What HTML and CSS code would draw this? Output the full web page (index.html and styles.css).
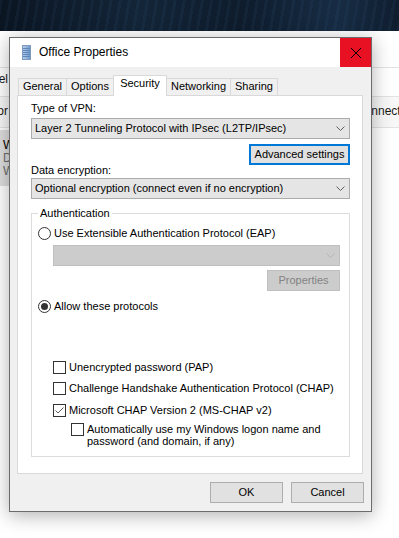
FILE: index.html
```html
<!DOCTYPE html>
<html>
<head>
<meta charset="utf-8">
<title>Office Properties</title>
<link rel="stylesheet" href="styles.css">
</head>
<body>
<div class="wallpaper"></div>
<div class="bgwin">
  <div class="bg-row bg-top"></div>
  <div class="bg-row bg-nav"><div class="bg-left"><span>Control Panel</span></div></div>
  <div class="bg-row bg-tool">
    <div class="bg-left"><span>Monitor</span></div>
    <div class="bg-rightwrap"><span class="bg-right">Connection</span></div>
  </div>
  <div class="bg-list">
    <div class="bg-item">
      <div class="bg-line">WAN</div>
      <div class="bg-line muted">DSL</div>
      <div class="bg-line muted">WAN</div>
    </div>
  </div>
</div>

<div class="dialog">
  <div class="titlebar">
    <svg class="appicon" width="9" height="15" viewBox="0 0 9 15">
      <defs>
        <linearGradient id="ig" x1="0" y1="0" x2="1" y2="0">
          <stop offset="0" stop-color="#b9d2ee"/>
          <stop offset="1" stop-color="#6d97c8"/>
        </linearGradient>
      </defs>
      <rect x="0.5" y="0.5" width="8" height="14" fill="url(#ig)" stroke="#7f9cc0"/>
      <path d="M1 3.5H8M1 5.5H8M1 7.5H8M1 9.5H8M1 11.5H8" stroke="#5f86b6" stroke-width="1"/>
    </svg>
    <span class="title">Office Properties</span>
    <div class="close">
      <svg width="10" height="10" viewBox="0 0 10 10"><path d="M0 0L10 10M10 0L0 10" stroke="#000" stroke-width="1"/></svg>
    </div>
  </div>
  <div class="dbody">
    <div class="tabs">
      <div class="tab t-general">General</div>
      <div class="tab t-options">Options</div>
      <div class="tab t-security active">Security</div>
      <div class="tab t-net">Networking</div>
      <div class="tab t-share">Sharing</div>
    </div>
    <div class="panel">
      <div class="label">Type of VPN:</div>
      <div class="select">
        <span>Layer 2 Tunneling Protocol with IPsec (L2TP/IPsec)</span>
        <svg class="chev" width="9" height="5" viewBox="0 0 9 5"><path d="M0.5 0.5L4.5 4.5L8.5 0.5" fill="none" stroke="#606060"/></svg>
      </div>
      <div class="right-row"><div class="btn adv">Advanced settings</div></div>
      <div class="label label-tight">Data encryption:</div>
      <div class="select">
        <span>Optional encryption (connect even if no encryption)</span>
        <svg class="chev" width="9" height="5" viewBox="0 0 9 5"><path d="M0.5 0.5L4.5 4.5L8.5 0.5" fill="none" stroke="#606060"/></svg>
      </div>
      <fieldset class="group">
        <legend>Authentication</legend>
        <div class="opt opt-eap"><span class="radio"></span>Use Extensible Authentication Protocol (EAP)</div>
        <div class="select disabled">
          <span></span>
          <svg class="chev" width="9" height="5" viewBox="0 0 9 5"><path d="M0.5 0.5L4.5 4.5L8.5 0.5" fill="none" stroke="#b4b4b4"/></svg>
        </div>
        <div class="right-row"><div class="btn btn-disabled">Properties</div></div>
        <div class="opt opt-allow"><span class="radio checked"></span>Allow these protocols</div>
        <div class="checks">
          <div class="opt chk c1"><span class="cb"></span>Unencrypted password (PAP)</div>
          <div class="opt chk c2"><span class="cb"></span>Challenge Handshake Authentication Protocol (CHAP)</div>
          <div class="opt chk c3"><span class="cb"><svg width="11" height="11" viewBox="0 0 11 11"><path d="M1.5 5.5L4 8L9.5 2.5" fill="none" stroke="#606060" stroke-width="1"/></svg></span>Microsoft CHAP Version 2 (MS-CHAP v2)</div>
          <div class="opt chk c4"><span class="cb"></span><span class="multi">Automatically use my Windows logon name and<br>password (and domain, if any)</span></div>
        </div>
      </fieldset>
    </div>
    <div class="footer">
      <div class="btn fbtn">OK</div>
      <div class="btn fbtn">Cancel</div>
    </div>
  </div>
</div>
</body>
</html>
```
FILE: styles.css
```css
* { box-sizing: border-box; }
html, body { margin: 0; padding: 0; }
body {
  width: 399px;
  height: 538px;
  overflow: hidden;
  position: relative;
  background: #ffffff;
  font-family: "Liberation Sans", Arial, sans-serif;
  font-size: 11px;
  color: #000;
}

/* desktop wallpaper */
.wallpaper {
  height: 31px;
  background:
    repeating-linear-gradient(100deg, rgba(60,100,140,0.10) 0 3px, rgba(0,0,0,0) 3px 9px),
    linear-gradient(90deg, #0b1522 0%, #132538 35%, #0e1c2c 60%, #172c44 85%, #0f1d2e 100%);
}

/* window behind (only its edges show beside the dialog) */
.bgwin { font-size: 12px; }
.bg-row { display: flex; border-bottom: 1px solid #e2e2e2; }
.bg-top { height: 37px; }
.bg-nav { height: 29px; padding-top: 4px; line-height: 14px; }
.bg-tool { height: 31px; padding-top: 7px; line-height: 14px; background: #f7f7f7; }
.bg-left {
  width: 9px;
  flex: none;
  overflow: hidden;
  display: flex;
  justify-content: flex-end;
  white-space: nowrap;
  padding-right: 1px;
  color: #1a1a1a;
}
.bg-rightwrap {
  margin-left: 363px;
  flex: 1;
  overflow: hidden;
  white-space: nowrap;
  color: #1a1a1a;
}
.bg-right { display: inline-block; margin-left: -16px; }
.bg-list { padding-top: 2px; }
.bg-item {
  width: 9px;
  height: 56px;
  overflow: hidden;
  background: #dedede;
  padding: 9px 0 0 3px;
  line-height: 13px;
}
.bg-line { white-space: nowrap; }
.muted { color: #6d6d6d; }

/* dialog */
.dialog {
  position: absolute;
  left: 9px;
  top: 37px;
  width: 363px;
  height: 475px;
  border: 1px solid #6c6c6c;
  background: #f0f0f0;
  box-shadow: 0 3px 18px rgba(0,0,0,0.32);
  z-index: 2;
  display: flex;
  flex-direction: column;
}
.titlebar {
  height: 29px;
  flex: none;
  background: #fff;
  display: flex;
  align-items: center;
  padding-left: 12px;
}
.appicon { display: block; flex: none; }
.title {
  margin-left: 8px;
  font-size: 12px;
  line-height: 29px;
  color: #000;
}
.close {
  margin-left: auto;
  width: 31px;
  height: 29px;
  background: #e81123;
  display: flex;
  align-items: center;
  justify-content: center;
}
.close svg { display: block; }

.dbody { padding: 11px 0 0 7px; }

/* tabs */
.tabs {
  display: flex;
  align-items: flex-end;
  height: 17px;
  padding-left: 1px;
  position: relative;
  z-index: 1;
}
.tab {
  height: 17px;
  border: 1px solid #d9d9d9;
  border-bottom: none;
  background: #f0f0f0;
  text-align: center;
  line-height: 15px;
  margin-left: -1px;
}
.tab:first-child { margin-left: 0; }
.t-general { width: 49px; }
.t-options { width: 48px; }
.t-security { width: 54px; }
.t-net { width: 65px; }
.t-share { width: 48px; }
.tab.active {
  height: 21px;
  margin-bottom: -1px;
  background: #fff;
  line-height: 15px;
}

/* panel */
.panel {
  width: 346px;
  height: 379px;
  background: #fff;
  border: 1px solid #d9d9d9;
  padding: 6px 12px 0 13px;
}
.label { line-height: 13px; height: 13px; width: fit-content; }
.label-tight { margin-top: -1px; }
.select {
  height: 21px;
  margin-top: 3px;
  background: #e5e5e5;
  border: 1px solid #acacac;
  display: flex;
  align-items: center;
  padding: 0 4px 0 3px;
  line-height: 19px;
  white-space: nowrap;
}
.select span { flex: 1; }
.chev { display: block; flex: none; }
.label-tight + .select { margin-top: 1px; }

.right-row { display: flex; justify-content: flex-end; }
.btn {
  height: 21px;
  background: #e1e1e1;
  border: 1px solid #adadad;
  text-align: center;
  line-height: 19px;
  white-space: nowrap;
}
.adv {
  width: 101px;
  margin-top: 5px;
  border: 2px solid #0078d7;
  line-height: 17px;
}

/* authentication group */
.group {
  margin: 8px 0 0 0;
  padding: 0 9px 9px 6px;
  border: 1px solid #dcdcdc;
  min-width: 0;
}
.group legend {
  padding: 0 2px;
  line-height: 13px;
}
.opt {
  display: flex;
  align-items: center;
  height: 13px;
  line-height: 13px;
  white-space: nowrap;
}
.opt-eap { margin-top: 7px; }
.radio {
  width: 13px;
  height: 13px;
  border: 1px solid #333;
  border-radius: 50%;
  background: #fff;
  margin-right: 3px;
  flex: none;
  display: flex;
  align-items: center;
  justify-content: center;
}
.radio.checked::after {
  content: "";
  width: 7px;
  height: 7px;
  border-radius: 50%;
  background: #333;
}
.select.disabled {
  margin: 5px 0 0 15px;
  background: #cccccc;
  border-color: #bfbfbf;
}
.btn-disabled {
  width: 73px;
  margin-top: 4px;
  background: #cccccc;
  border-color: #bfbfbf;
  color: #838383;
}
.opt-allow { margin-top: 9px; }

.checks { padding-left: 15px; margin-top: 48px; }
.cb {
  width: 13px;
  height: 13px;
  border: 1px solid #333;
  background: #fff;
  margin-right: 3px;
  flex: none;
  display: flex;
}
.cb svg { display: block; }
.c2 { margin-top: 8px; }
.c3 { margin-top: 9px; }
.c4 {
  margin-top: 6px;
  margin-left: 18px;
  height: auto;
  align-items: flex-start;
}
.multi { line-height: 12px; }

/* footer */
.footer {
  display: flex;
  justify-content: flex-end;
  gap: 8px;
  padding: 8px 7px 0 0;
}
.fbtn { width: 73px; }
```
